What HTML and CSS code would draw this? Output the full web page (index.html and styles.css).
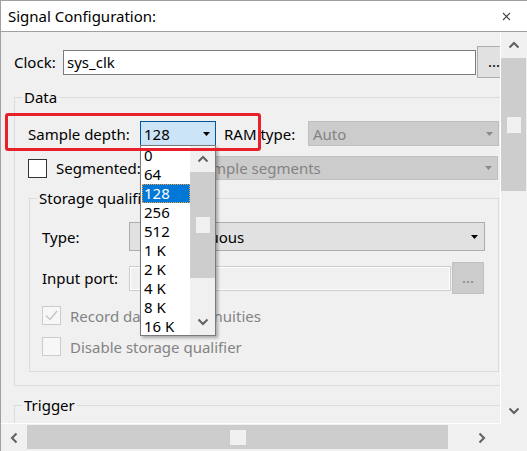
FILE: index.html
```html
<!DOCTYPE html>
<html>
<head>
<meta charset="utf-8">
<link rel="stylesheet" href="styles.css">
</head>
<body>
<div class="window">
  <div class="titlebar">
    <span class="title">Signal Configuration:</span>
    <svg class="close" width="9" height="9" viewBox="0 0 9 9"><path d="M1 1L8 8M8 1L1 8" stroke="#444" stroke-width="1.1" fill="none"/></svg>
  </div>
  <div class="main">
    <div class="viewport">
      <div class="content">
        <div class="row clock-row">
          <span class="lbl clock-lbl">Clock:</span>
          <div class="input clock-input">sys_clk</div>
          <div class="btn dots-btn">...</div>
        </div>

        <fieldset class="group data-group">
          <legend>Data</legend>
          <div class="group-body data-body">
            <div class="row depth-row">
              <span class="lbl depth-lbl">Sample depth:</span>
              <div class="combo-wrap">
                <div class="combo combo-focus depth-combo">
                  <span class="combo-text">128</span>
                  <svg class="arrow" width="7" height="4" viewBox="0 0 7 4"><path d="M0 0H7L3.5 4Z" fill="#000"/></svg>
                </div>
                <div class="dropdown">
                  <div class="items">
                    <div class="item">0</div>
                    <div class="item">64</div>
                    <div class="item selected">128</div>
                    <div class="item">256</div>
                    <div class="item">512</div>
                    <div class="item">1 K</div>
                    <div class="item">2 K</div>
                    <div class="item">4 K</div>
                    <div class="item">8 K</div>
                    <div class="item">16 K</div>
                  </div>
                  <div class="lscroll">
                    <div class="sarrow v">
                      <svg width="12" height="8" viewBox="0 0 12 8"><polyline points="1.5,6.5 6,2 10.5,6.5" fill="none" stroke="#606060" stroke-width="2"/></svg>
                    </div>
                    <div class="lthumb"><span class="grip vgrip"></span></div>
                    <div class="spacer"></div>
                    <div class="sarrow v">
                      <svg width="12" height="8" viewBox="0 0 12 8"><polyline points="1.5,1.5 6,6 10.5,1.5" fill="none" stroke="#606060" stroke-width="2"/></svg>
                    </div>
                  </div>
                </div>
              </div>
              <span class="lbl ram-lbl">RAM type:</span>
              <div class="combo combo-disabled auto-combo">
                <span class="combo-text">Auto</span>
                <svg class="arrow" width="7" height="4" viewBox="0 0 7 4"><path d="M0 0H7L3.5 4Z" fill="#8a8a8a"/></svg>
              </div>
              <div class="highlight"></div>
            </div>

            <div class="row seg-row">
              <div class="chk-line seg-chk">
                <span class="checkbox"></span>
                <span class="lbl">Segmented:</span>
              </div>
              <div class="combo combo-disabled seg-combo">
                <span class="combo-text seg-text">2  64 sample segments</span>
                <svg class="arrow" width="7" height="4" viewBox="0 0 7 4"><path d="M0 0H7L3.5 4Z" fill="#8a8a8a"/></svg>
              </div>
            </div>

            <fieldset class="group storage-group">
              <legend>Storage qualifier</legend>
              <div class="group-body storage-body">
                <div class="row type-row">
                  <span class="lbl field-lbl">Type:</span>
                  <div class="combo combo-normal type-combo">
                    <span class="combo-text type-text">Continuous</span>
                    <svg class="arrow" width="7" height="4" viewBox="0 0 7 4"><path d="M0 0H7L3.5 4Z" fill="#000"/></svg>
                  </div>
                </div>
                <div class="row port-row">
                  <span class="lbl field-lbl">Input port:</span>
                  <div class="input input-disabled port-input"></div>
                  <div class="btn btn-disabled port-btn">...</div>
                </div>
                <div class="row chk-row record-row">
                  <span class="checkbox checkbox-disabled">
                    <svg width="17" height="17" viewBox="0 0 17 17"><polyline points="3,8.5 7,12.5 14,4" fill="none" stroke="#c4c4c4" stroke-width="1.4"/></svg>
                  </span>
                  <span class="lbl lbl-disabled">Record data discontinuities</span>
                </div>
                <div class="row chk-row disable-row">
                  <span class="checkbox checkbox-disabled"></span>
                  <span class="lbl lbl-disabled">Disable storage qualifier</span>
                </div>
              </div>
            </fieldset>
          </div>
        </fieldset>

        <fieldset class="group trigger-group">
          <legend>Trigger</legend>
          <div class="group-body trigger-body"></div>
        </fieldset>
      </div>
    </div>
    <div class="vscroll">
      <div class="sarrow v main-arrow">
        <svg width="12" height="8" viewBox="0 0 12 8"><polyline points="1.5,6.5 6,2 10.5,6.5" fill="none" stroke="#606060" stroke-width="2"/></svg>
      </div>
      <div class="vthumb"><span class="grip vgrip"></span></div>
      <div class="spacer"></div>
      <div class="sarrow v main-arrow">
        <svg width="12" height="8" viewBox="0 0 12 8"><polyline points="1.5,1.5 6,6 10.5,1.5" fill="none" stroke="#606060" stroke-width="2"/></svg>
      </div>
    </div>
  </div>
  <div class="bottom">
    <div class="hscroll">
      <div class="sarrow h">
        <svg width="8" height="12" viewBox="0 0 8 12"><polyline points="6.5,1.5 2,6 6.5,10.5" fill="none" stroke="#606060" stroke-width="2"/></svg>
      </div>
      <div class="htrack">
        <div class="hthumb"><span class="grip hgrip"></span></div>
      </div>
      <div class="sarrow h">
        <svg width="8" height="12" viewBox="0 0 8 12"><polyline points="1.5,1.5 6,6 1.5,10.5" fill="none" stroke="#606060" stroke-width="2"/></svg>
      </div>
    </div>
    <div class="corner"></div>
  </div>
</div>
</body>
</html>
```

FILE: styles.css
```css
* { box-sizing: border-box; }

body {
  margin: 0;
  font-family: "Noto Sans", "Open Sans", sans-serif;
  font-size: 15px;
  color: #000;
  background: #f0f0f0;
}

.window {
  width: 527px;
  height: 451px;
  border-top: 1px solid #a0a0a0;
  border-left: 1px solid #a0a0a0;
  background: #f0f0f0;
  display: flex;
  flex-direction: column;
  overflow: hidden;
}

/* title */
.titlebar {
  flex: none;
  height: 31px;
  background: #fff;
  border-bottom: 1px solid #a0a0a0;
  display: flex;
  align-items: center;
  justify-content: space-between;
  padding: 0 16px 0 7px;
}
.title { line-height: 20px; }
.close { display: block; }

/* main area */
.main { flex: none; height: 392px; display: flex; }

.viewport {
  flex: none;
  width: 500px;
  height: 392px;
  border-right: 1px solid #fff;
  border-bottom: 1px solid #fff;
  overflow: hidden;
}

.content { padding-top: 14px; width: 520px; }

.row { display: flex; align-items: center; flex: none; }
.row > * { flex: none; }
.lbl { line-height: 20px; white-space: pre; }
.lbl-disabled { color: #838383; }

/* clock */
.clock-row { height: 32px; margin-left: 13px; }
.clock-lbl { width: 49px; }
.input {
  height: 25px;
  border: 1px solid #7a7a7a;
  background: #fff;
  padding-left: 3px;
  line-height: 22px;
}
.clock-input { width: 413px; }
.btn {
  background: #e1e1e1;
  border: 1px solid #adadad;
  text-align: center;
  line-height: 28px;
}
.dots-btn { width: 34px; height: 32px; margin-left: 1px; }

/* groups */
.group {
  margin: 0;
  padding: 0;
  border: 1px solid #dcdcdc;
  min-width: 0;
}
.group legend {
  padding: 0 2px;
  margin-left: 7px;
  line-height: 20px;
}
.data-group { margin: 9px 0 0 13px; width: 500px; }
.data-body { padding: 14px 0 13px 13px; }

.depth-row { height: 25px; margin-bottom: 10px; position: relative; }
.depth-lbl { width: 112px; }
.combo-wrap { position: relative; width: 76px; height: 25px; }

.combo {
  display: flex;
  align-items: center;
  justify-content: space-between;
  padding: 0 5px 0 3px;
  border: 1px solid #adadad;
  background: #e1e1e1;
  line-height: 20px;
  white-space: pre;
  overflow: hidden;
}
.combo .arrow { flex: none; display: block; }
.combo-focus { background: #cce4f7; border-color: #005499; height: 25px; }
.combo-disabled { background: #cccccc; border-color: #bfbfbf; color: #838383; }
.combo-normal { background: #e1e1e1; border-color: #adadad; }

.depth-combo { width: 76px; }
.ram-lbl { width: 84px; margin-left: 8px; }
.auto-combo { width: 191px; height: 25px; padding-left: 4px; }

.highlight {
  position: absolute;
  left: -23px;
  top: -8px;
  width: 256px;
  height: 38px;
  border: 3px solid #e8202a;
  border-radius: 3px;
  z-index: 3;
}

/* dropdown list */
.dropdown {
  position: absolute;
  left: 0;
  top: 24px;
  width: 76px;
  height: 191px;
  border: 1px solid #7a7a7a;
  background: #fff;
  display: flex;
  z-index: 2;
  box-shadow: 2px 2px 3px rgba(0, 0, 0, 0.3);
}
.items { width: 49px; height: 189px; overflow: hidden; }
.item {
  height: 19px;
  line-height: 19px;
  padding: 0 0 0 3px;
  white-space: nowrap;
}
.item.selected {
  background: #0078d7;
  color: #fff;
  outline: 1px dotted #f0a040;
  outline-offset: -1px;
  padding-left: 2px;
  margin-left: 1px;
}
.lscroll {
  width: 25px;
  height: 189px;
  display: flex;
  flex-direction: column;
  background: #f0f0f0;
}
.sarrow { display: flex; align-items: center; justify-content: center; flex: none; }
.sarrow svg { display: block; }
.sarrow.v { height: 26px; }
.sarrow.h { width: 26px; height: 27px; }
.lthumb {
  height: 106px;
  background: #cdcdcd;
  display: flex;
  align-items: center;
  justify-content: center;
}
.spacer { flex: 1; }
.grip { display: block; background: #f0f0f0; }
.vgrip { width: 14px; height: 16px; }
.hgrip { width: 16px; height: 15px; }

/* segmented */
.seg-row { height: 24px; margin-bottom: 8px; }
.chk-line { display: flex; align-items: center; width: 112px; }
.checkbox {
  flex: none;
  width: 19px;
  height: 19px;
  border: 1px solid #333;
  background: #fff;
  margin-right: 9px;
  display: flex;
  align-items: center;
  justify-content: center;
}
.checkbox svg { display: block; }
.checkbox-disabled { border-color: #cccccc; background: #f7f7f7; }
.seg-combo { width: 358px; height: 24px; padding-left: 18px; }

/* storage group */
.storage-group { margin-left: 1px; width: 470px; }
.storage-body { padding: 14px 0 15px 12px; }
.field-lbl { width: 87px; }
.type-row { height: 29px; margin-bottom: 11px; }
.type-combo { width: 356px; height: 29px; padding-left: 33px; padding-right: 6px; }
.port-row { height: 32px; margin-bottom: 12px; }
.input-disabled {
  background: #f0f0f0;
  border-color: #cccccc;
  box-shadow: inset 0 0 0 1px #fff;
}
.port-input { width: 322px; }
.btn-disabled { background: #cccccc; border-color: #bfbfbf; color: #838383; }
.port-btn { width: 32px; height: 32px; margin-left: 1px; }
.chk-row { height: 19px; }
.record-row { margin-bottom: 12px; }

/* trigger */
.trigger-group { margin: 9px 0 0 13px; width: 500px; }
.trigger-body { height: 60px; }

/* scrollbars */
.vscroll {
  flex: none;
  width: 26px;
  height: 392px;
  display: flex;
  flex-direction: column;
  background: #f0f0f0;
}
.vthumb {
  height: 133px;
  width: 25px;
  background: #cdcdcd;
  display: flex;
  align-items: center;
  justify-content: center;
}

.bottom { flex: none; height: 27px; display: flex; }
.hscroll { width: 494px; height: 27px; display: flex; background: #f0f0f0; }
.htrack { flex: 1; height: 27px; padding-top: 1px; }
.hthumb {
  width: 421px;
  height: 24px;
  background: #cdcdcd;
  display: flex;
  align-items: center;
  justify-content: center;
}
.corner { flex: 1; background: #f0f0f0; }
```
